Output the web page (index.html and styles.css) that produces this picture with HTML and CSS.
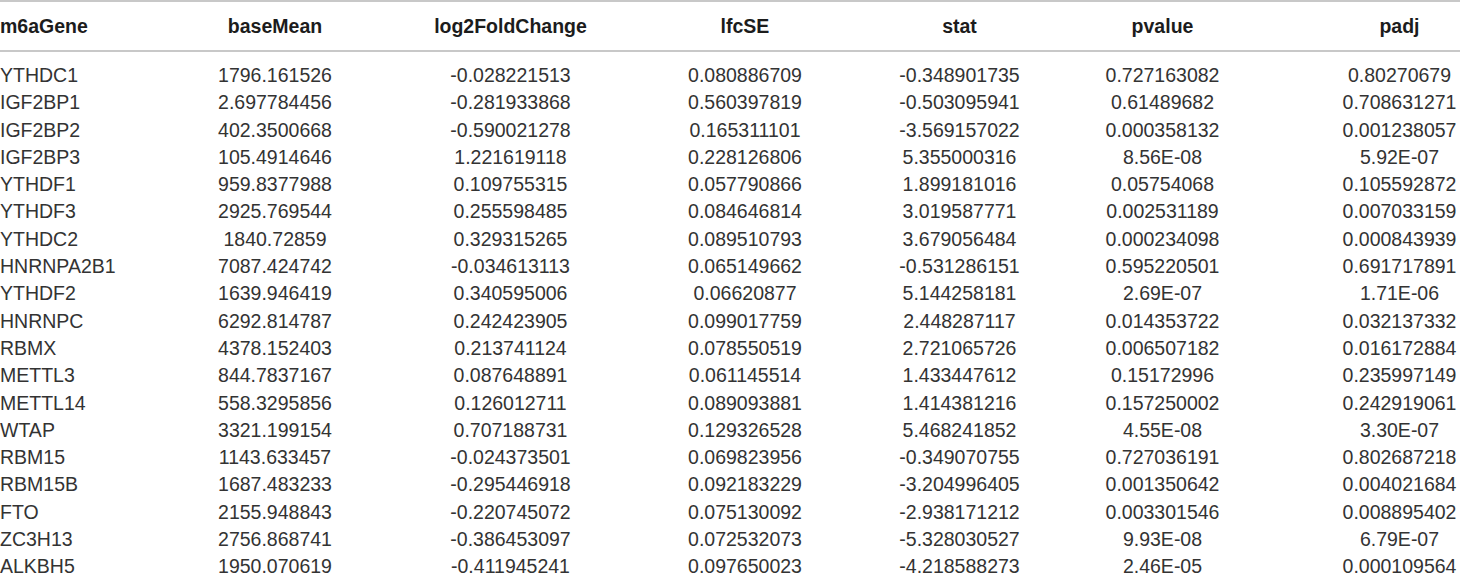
FILE: index.html
```html
<!DOCTYPE html>
<html lang="en">
<head>
<meta charset="utf-8">
<title>m6A gene expression</title>
<link rel="stylesheet" href="styles.css">
</head>
<body>
<div class="table">
  <div class="row head">
    <div class="cell gene">m6aGene</div>
    <div class="cell c2">baseMean</div>
    <div class="cell c3">log2FoldChange</div>
    <div class="cell c4">lfcSE</div>
    <div class="cell c5">stat</div>
    <div class="cell c6">pvalue</div>
    <div class="cell c7">padj</div>
  </div>
  <div class="body">
    <div class="row"><div class="cell gene">YTHDC1</div><div class="cell c2">1796.161526</div><div class="cell c3">-0.028221513</div><div class="cell c4">0.080886709</div><div class="cell c5">-0.348901735</div><div class="cell c6">0.727163082</div><div class="cell c7">0.80270679</div></div>
    <div class="row"><div class="cell gene">IGF2BP1</div><div class="cell c2">2.697784456</div><div class="cell c3">-0.281933868</div><div class="cell c4">0.560397819</div><div class="cell c5">-0.503095941</div><div class="cell c6">0.61489682</div><div class="cell c7">0.708631271</div></div>
    <div class="row"><div class="cell gene">IGF2BP2</div><div class="cell c2">402.3500668</div><div class="cell c3">-0.590021278</div><div class="cell c4">0.165311101</div><div class="cell c5">-3.569157022</div><div class="cell c6">0.000358132</div><div class="cell c7">0.001238057</div></div>
    <div class="row"><div class="cell gene">IGF2BP3</div><div class="cell c2">105.4914646</div><div class="cell c3">1.221619118</div><div class="cell c4">0.228126806</div><div class="cell c5">5.355000316</div><div class="cell c6">8.56E-08</div><div class="cell c7">5.92E-07</div></div>
    <div class="row"><div class="cell gene">YTHDF1</div><div class="cell c2">959.8377988</div><div class="cell c3">0.109755315</div><div class="cell c4">0.057790866</div><div class="cell c5">1.899181016</div><div class="cell c6">0.05754068</div><div class="cell c7">0.105592872</div></div>
    <div class="row"><div class="cell gene">YTHDF3</div><div class="cell c2">2925.769544</div><div class="cell c3">0.255598485</div><div class="cell c4">0.084646814</div><div class="cell c5">3.019587771</div><div class="cell c6">0.002531189</div><div class="cell c7">0.007033159</div></div>
    <div class="row"><div class="cell gene">YTHDC2</div><div class="cell c2">1840.72859</div><div class="cell c3">0.329315265</div><div class="cell c4">0.089510793</div><div class="cell c5">3.679056484</div><div class="cell c6">0.000234098</div><div class="cell c7">0.000843939</div></div>
    <div class="row"><div class="cell gene">HNRNPA2B1</div><div class="cell c2">7087.424742</div><div class="cell c3">-0.034613113</div><div class="cell c4">0.065149662</div><div class="cell c5">-0.531286151</div><div class="cell c6">0.595220501</div><div class="cell c7">0.691717891</div></div>
    <div class="row"><div class="cell gene">YTHDF2</div><div class="cell c2">1639.946419</div><div class="cell c3">0.340595006</div><div class="cell c4">0.06620877</div><div class="cell c5">5.144258181</div><div class="cell c6">2.69E-07</div><div class="cell c7">1.71E-06</div></div>
    <div class="row"><div class="cell gene">HNRNPC</div><div class="cell c2">6292.814787</div><div class="cell c3">0.242423905</div><div class="cell c4">0.099017759</div><div class="cell c5">2.448287117</div><div class="cell c6">0.014353722</div><div class="cell c7">0.032137332</div></div>
    <div class="row"><div class="cell gene">RBMX</div><div class="cell c2">4378.152403</div><div class="cell c3">0.213741124</div><div class="cell c4">0.078550519</div><div class="cell c5">2.721065726</div><div class="cell c6">0.006507182</div><div class="cell c7">0.016172884</div></div>
    <div class="row"><div class="cell gene">METTL3</div><div class="cell c2">844.7837167</div><div class="cell c3">0.087648891</div><div class="cell c4">0.061145514</div><div class="cell c5">1.433447612</div><div class="cell c6">0.15172996</div><div class="cell c7">0.235997149</div></div>
    <div class="row"><div class="cell gene">METTL14</div><div class="cell c2">558.3295856</div><div class="cell c3">0.126012711</div><div class="cell c4">0.089093881</div><div class="cell c5">1.414381216</div><div class="cell c6">0.157250002</div><div class="cell c7">0.242919061</div></div>
    <div class="row"><div class="cell gene">WTAP</div><div class="cell c2">3321.199154</div><div class="cell c3">0.707188731</div><div class="cell c4">0.129326528</div><div class="cell c5">5.468241852</div><div class="cell c6">4.55E-08</div><div class="cell c7">3.30E-07</div></div>
    <div class="row"><div class="cell gene">RBM15</div><div class="cell c2">1143.633457</div><div class="cell c3">-0.024373501</div><div class="cell c4">0.069823956</div><div class="cell c5">-0.349070755</div><div class="cell c6">0.727036191</div><div class="cell c7">0.802687218</div></div>
    <div class="row"><div class="cell gene">RBM15B</div><div class="cell c2">1687.483233</div><div class="cell c3">-0.295446918</div><div class="cell c4">0.092183229</div><div class="cell c5">-3.204996405</div><div class="cell c6">0.001350642</div><div class="cell c7">0.004021684</div></div>
    <div class="row"><div class="cell gene">FTO</div><div class="cell c2">2155.948843</div><div class="cell c3">-0.220745072</div><div class="cell c4">0.075130092</div><div class="cell c5">-2.938171212</div><div class="cell c6">0.003301546</div><div class="cell c7">0.008895402</div></div>
    <div class="row"><div class="cell gene">ZC3H13</div><div class="cell c2">2756.868741</div><div class="cell c3">-0.386453097</div><div class="cell c4">0.072532073</div><div class="cell c5">-5.328030527</div><div class="cell c6">9.93E-08</div><div class="cell c7">6.79E-07</div></div>
    <div class="row"><div class="cell gene">ALKBH5</div><div class="cell c2">1950.070619</div><div class="cell c3">-0.411945241</div><div class="cell c4">0.097650023</div><div class="cell c5">-4.218588273</div><div class="cell c6">2.46E-05</div><div class="cell c7">0.000109564</div></div>
  </div>
</div>
</body>
</html>
```

FILE: styles.css
```css
html, body {
  margin: 0;
  padding: 0;
  background: #ffffff;
}

body {
  font-family: "Liberation Sans", Arial, Helvetica, sans-serif;
  font-size: 19.5px;
  color: #333333;
}

.table {
  width: 1460px;
}

.row {
  display: grid;
  grid-template-columns: 157px 236px 235px 224px 209px 220px 179px;
  align-items: center;
}

.head {
  height: 48px;
  border-top: 2px solid #c8c8c8;
  border-bottom: 2px solid #c8c8c8;
  font-weight: bold;
  color: #1c1c1c;
}

.body {
  padding-top: 10px;
}

.body .row {
  height: 27.3px;
  line-height: 27.3px;
}

.cell {
  text-align: center;
  white-space: nowrap;
}

.cell.gene {
  text-align: left;
}

.cell.c4 {
  padding-left: 10px;
}

.cell.c5 {
  padding-left: 6px;
}

.cell.c6 {
  padding-right: 17px;
}

.cell.c7 {
  padding-left: 58px;
}
```
